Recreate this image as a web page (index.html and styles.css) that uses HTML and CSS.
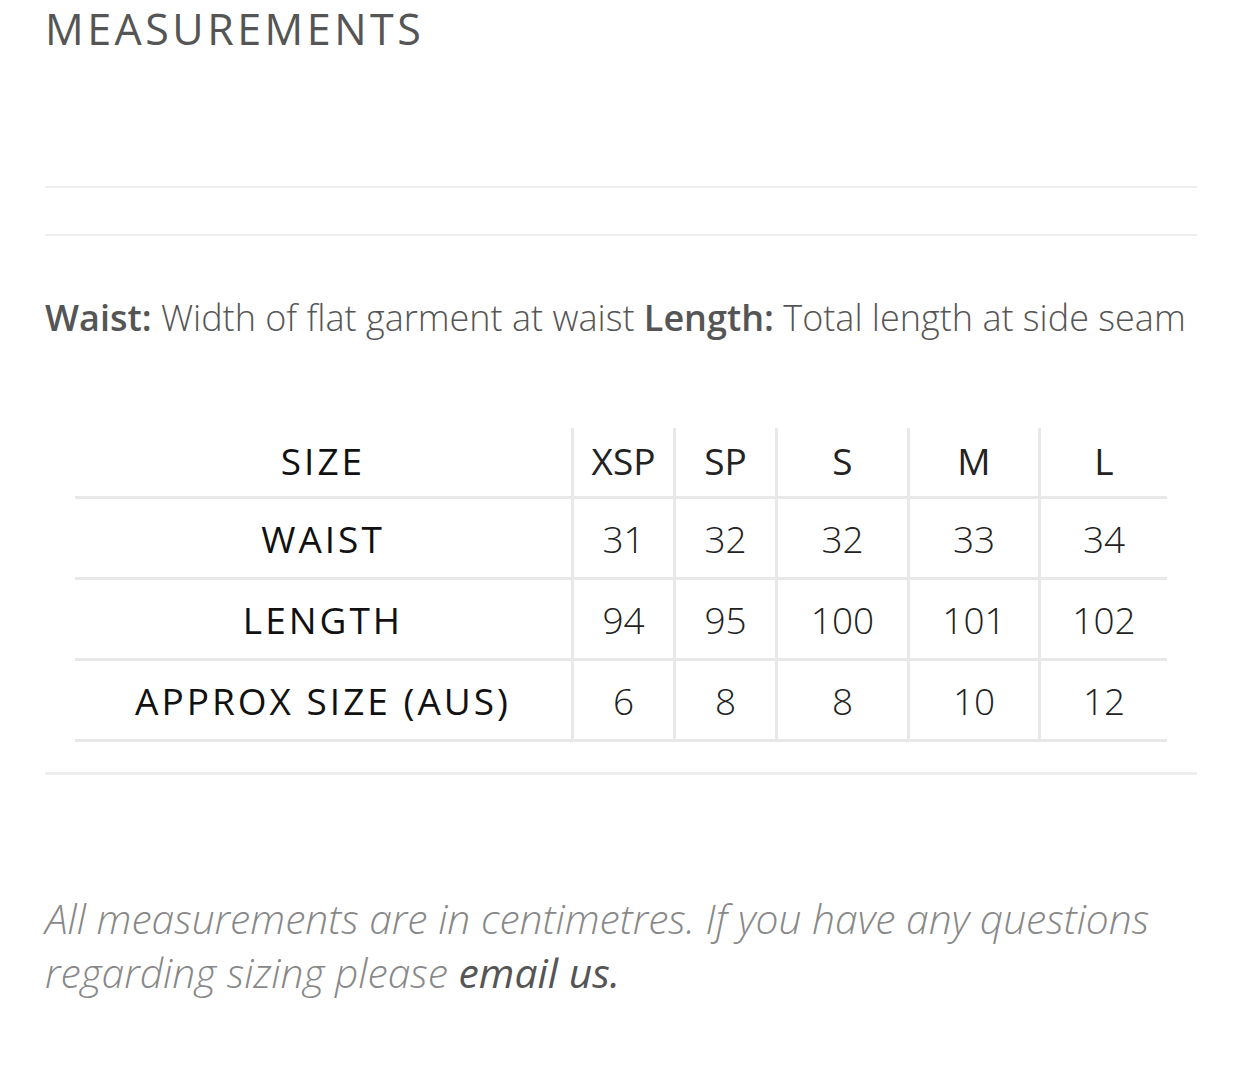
FILE: index.html
```html
<!DOCTYPE html>
<html lang="en">
<head>
<meta charset="utf-8">
<title>Measurements</title>
<link rel="stylesheet" href="styles.css">
</head>
<body>
<div class="page">
  <h2 class="title">MEASUREMENTS</h2>
  <div class="divider-box"></div>
  <p class="desc"><strong>Waist:</strong> Width of flat garment at waist <strong>Length:</strong> Total length at side seam</p>
  <div class="table-wrap">
    <table class="sizes">
      <tr class="head"><th>SIZE</th><td>XSP</td><td>SP</td><td>S</td><td>M</td><td>L</td></tr>
      <tr><th>WAIST</th><td>31</td><td>32</td><td>32</td><td>33</td><td>34</td></tr>
      <tr><th>LENGTH</th><td>94</td><td>95</td><td>100</td><td>101</td><td>102</td></tr>
      <tr><th>APPROX SIZE (AUS)</th><td>6</td><td>8</td><td>8</td><td>10</td><td>12</td></tr>
    </table>
  </div>
  <div class="rule"></div>
  <p class="note">All measurements are in centimetres. If you have any questions regarding sizing please <a href="#">email us.</a></p>
</div>
</body>
</html>
```
FILE: styles.css
```css
html, body {
  margin: 0;
  padding: 0;
  background: #fff;
}
.page {
  padding: 0 45px;
  font-family: "Open Sans", "Liberation Sans", sans-serif;
  color: #555;
}
.title {
  margin: 0;
  padding-top: 7px;
  font-size: 43px;
  line-height: 43px;
  font-weight: 400;
  letter-spacing: 3.5px;
  color: #555;
}
.divider-box {
  margin-top: 136px;
  height: 46px;
  border-top: 2px solid #eee;
  border-bottom: 2px solid #eee;
}
.desc {
  margin: 58px 0 0;
  font-size: 36px;
  line-height: 48px;
  font-weight: 300;
  color: #555;
  white-space: nowrap;
}
.desc strong {
  font-weight: 600;
}
.table-wrap {
  margin-top: 86px;
  padding: 0 30px;
}
.sizes {
  width: 100%;
  border-collapse: collapse;
  font-size: 37px;
  color: #222;
}
.sizes th {
  width: 496px;
  font-weight: 400;
  letter-spacing: 3px;
  text-align: center;
  color: #111;
}
.sizes th, .sizes td {
  height: 78px;
  padding: 0;
  border-bottom: 3px solid #e8e8e8;
  text-align: center;
}
.sizes td {
  font-weight: 300;
  border-left: 3px solid #e8e8e8;
}
.sizes td:nth-child(2), .sizes td:nth-child(3) { width: 99px; }
.sizes td:nth-child(4) { width: 129px; }
.sizes td:nth-child(5) { width: 128px; }
.sizes .head th, .sizes .head td {
  height: 64px;
  padding-bottom: 4px;
  font-weight: 400;
}
.rule {
  margin-top: 30px;
  border-top: 3px solid #eee;
}
.note {
  margin: 116px 0 0;
  font-size: 40.8px;
  line-height: 54px;
  font-style: italic;
  font-weight: 300;
  color: #888;
  padding-right: 40px;
}
.note a {
  color: #555;
  font-weight: 400;
  text-decoration: none;
}
```
